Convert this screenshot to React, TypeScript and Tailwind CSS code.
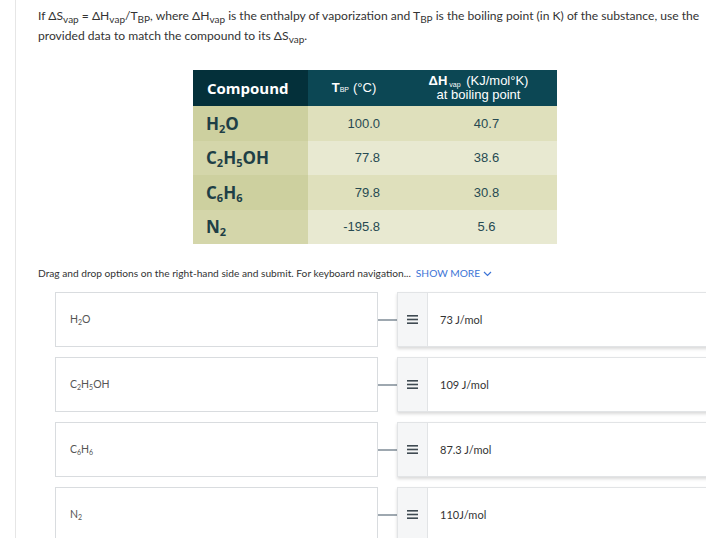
import React from "react";

const sans = { fontFamily: "Lato, 'Liberation Sans', sans-serif" };

type Row = { name: React.ReactNode; t: string; h: string };

const rows: Row[] = [
  { name: <>H<sub className="text-[11px]">2</sub>O</>, t: "100.0", h: "40.7" },
  {
    name: <>C<sub className="text-[11px]">2</sub>H<sub className="text-[11px]">5</sub>OH</>,
    t: "77.8",
    h: "38.6",
  },
  { name: <>C<sub className="text-[11px]">6</sub>H<sub className="text-[11px]">6</sub></>, t: "79.8", h: "30.8" },
  { name: <>N<sub className="text-[11px]">2</sub></>, t: "-195.8", h: "5.6" },
];

const pairs: { left: React.ReactNode; right: string }[] = [
  { left: <>H<sub className="text-[7px]">2</sub>O</>, right: "73 J/mol" },
  { left: <>C<sub className="text-[7px]">2</sub>H<sub className="text-[7px]">5</sub>OH</>, right: "109 J/mol" },
  { left: <>C<sub className="text-[7px]">6</sub>H<sub className="text-[7px]">6</sub></>, right: "87.3 J/mol" },
  { left: <>N<sub className="text-[7px]">2</sub></>, right: "110J/mol" },
];

function Handle() {
  return (
    <svg width="11" height="9" viewBox="0 0 11 9">
      <rect x="0" y="0" width="11" height="1.6" fill="#3f4a52" />
      <rect x="0" y="3.7" width="11" height="1.6" fill="#3f4a52" />
      <rect x="0" y="7.4" width="11" height="1.6" fill="#3f4a52" />
    </svg>
  );
}

const vsub = "text-[10px] leading-none align-baseline relative top-[3px]";

export default function App() {
  return (
    <div className="w-[706px] h-[538px] overflow-hidden bg-white relative" style={sans}>
      <div className="absolute left-[15px] top-0 bottom-0 w-px bg-[#e6e6e6]" />
      <div className="pl-[38px] pr-[4px] pt-[6px] text-[12.1px] leading-[20px] text-[#333]">
        If ΔS<span className={vsub}>vap</span> = ΔH<span className={vsub}>vap</span>/T
        <span className={vsub}>BP</span>, where ΔH<span className={vsub}>vap</span> is the enthalpy of vaporization and
        T<span className={vsub}>BP</span> is the boiling point (in K) of the substance, use the provided data to match
        the compound to its ΔS<span className={vsub}>vap</span>.
      </div>

      <div className="ml-[193px] mt-[24px] w-[364px]">
        <div className="flex h-[36px] text-white">
          <div
            className="w-[115px] bg-[#04303a] flex items-center pl-[14px] text-[15px] font-bold"
            style={{ fontFamily: "'Open Sans', sans-serif" }}
          >
            Compound
          </div>
          <div
            className="w-[92px] bg-[#0c4754] flex items-center justify-center text-[13px]"
            style={{ fontFamily: "'Liberation Sans', sans-serif" }}
          >
            <span className="font-bold">T</span>
            <sub className="text-[7px] mr-[4px] leading-none">BP</sub>(°C)
          </div>
          <div
            className="flex-1 bg-[#0c4754] flex flex-col items-center justify-center text-[13px] leading-[14px]"
            style={{ fontFamily: "'Liberation Sans', sans-serif" }}
          >
            <div>
              <span className="font-bold">ΔH</span>
              <sub className="text-[7px] mx-[2px] leading-none">vap</sub> (KJ/mol°K)
            </div>
            <div>at boiling point</div>
          </div>
        </div>
        {rows.map((r, i) => (
          <div key={i} className="flex h-[34.5px]">
            <div
              className={`w-[115px] flex items-center pl-[13px] text-[17px] font-bold text-[#1e3f46] ${
                i % 2 === 0 ? "bg-[#cdd09f]" : "bg-[#d4d6aa]"
              }`}
              style={{ fontFamily: "'Open Sans', sans-serif" }}
            >
              <span className="leading-none">{r.name}</span>
            </div>
            <div
              className={`flex-1 flex text-[13px] text-[#274a52] ${
                i % 2 === 0 ? "bg-[#dfe0bc]" : "bg-[#e8e9d1]"
              }`}
              style={{ fontFamily: "'Liberation Sans', sans-serif" }}
            >
              <div className="w-[92px] flex items-center justify-end pr-[20px]">{r.t}</div>
              <div className="flex-1 flex items-center justify-center pl-[16px]">{r.h}</div>
            </div>
          </div>
        ))}
      </div>

      <div className="pl-[38px] mt-[22px] text-[10.2px] text-[#333] flex items-center">
        Drag and drop options on the right-hand side and submit. For keyboard navigation...
        <span className="ml-[5px] text-[#3c74d6]">SHOW MORE</span>
        <svg width="9" height="6" viewBox="0 0 9 6" className="ml-[3px]">
          <path d="M1 1l3.5 3.5L8 1" fill="none" stroke="#3c74d6" strokeWidth="1.2" />
        </svg>
      </div>

      <div className="mt-[11px] ml-[55px] flex flex-col gap-[10px]">
        {pairs.map((p, i) => (
          <div key={i} className="flex items-center">
            <div className="w-[323px] h-[55px] shrink-0 border border-[#d9dcdf] flex items-center pl-[14px] text-[10.5px] text-[#555]">
              <span>{p.left}</span>
            </div>
            <div className="w-[19px] h-[2px] shrink-0 bg-[#9ea8b0]" />
            <div className="w-[420px] h-[55px] shrink-0 border border-[#e2e4e6] shadow-[0_2px_3px_rgba(0,0,0,0.15)] flex">
              <div className="w-[30px] bg-[#f5f6f7] border-r border-[#e2e4e6] flex items-center justify-center">
                <Handle />
              </div>
              <div className="flex items-center pl-[12px] text-[11px] text-[#333]">{p.right}</div>
            </div>
          </div>
        ))}
      </div>
    </div>
  );
}
